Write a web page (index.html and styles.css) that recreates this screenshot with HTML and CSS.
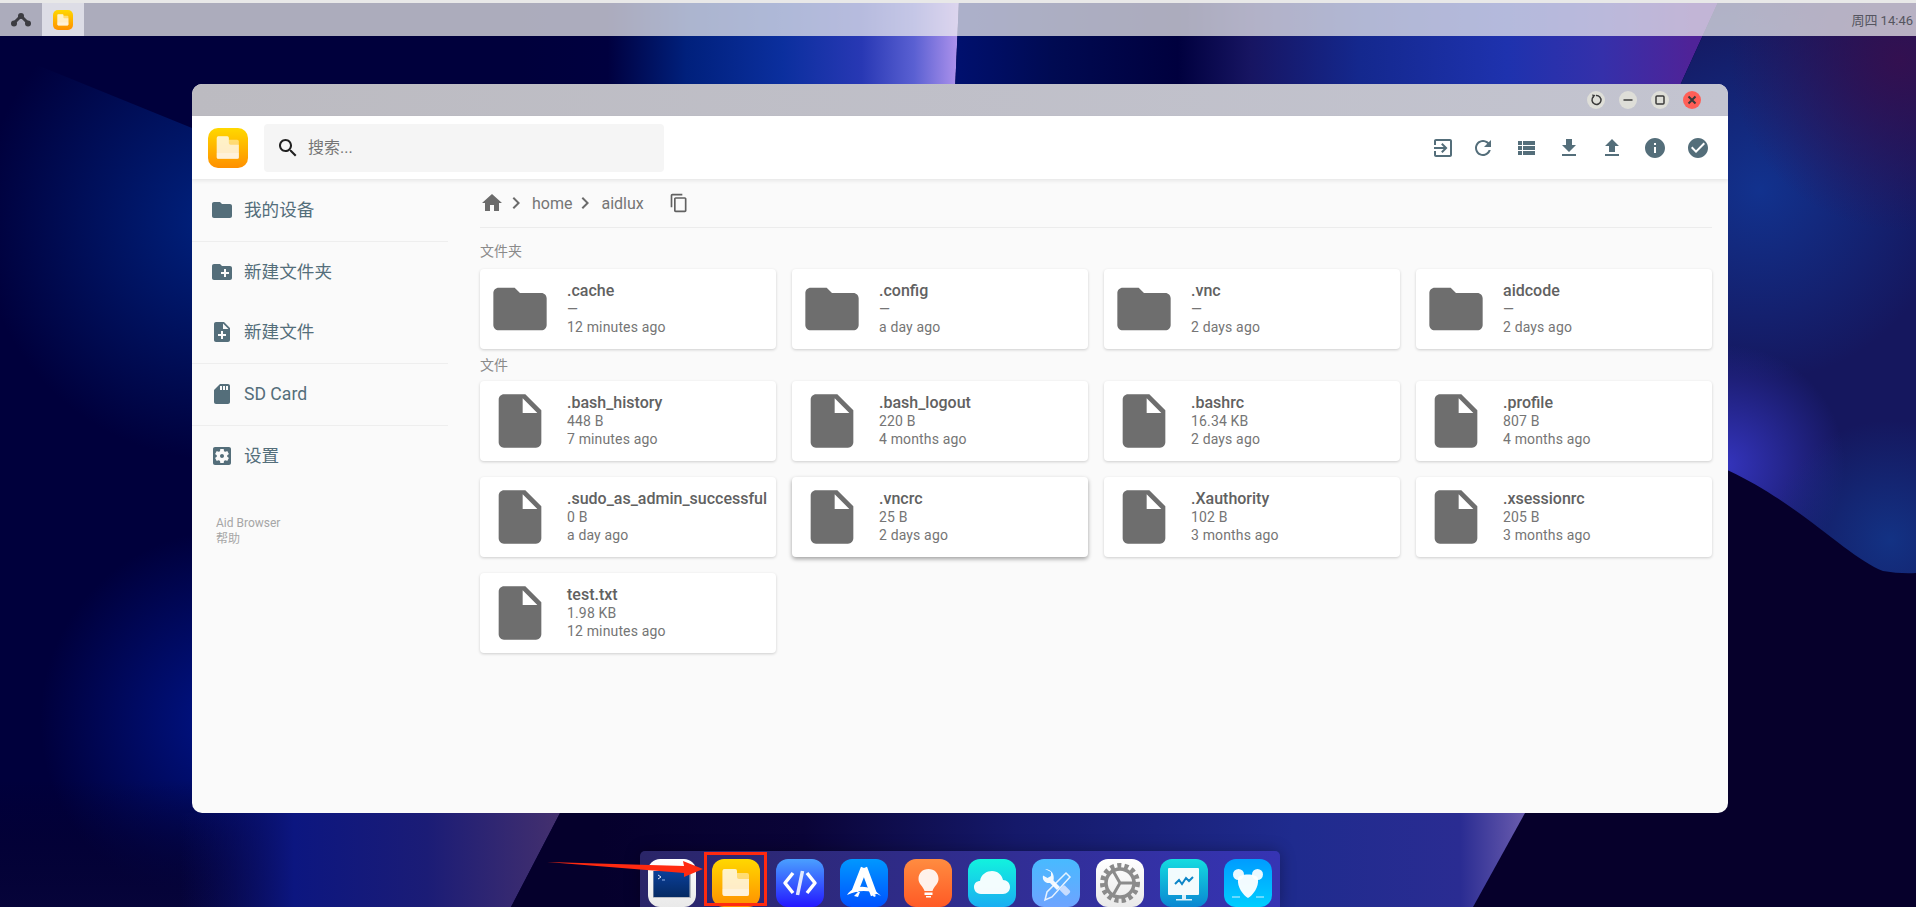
FILE: index.html
```html
<!DOCTYPE html>
<html lang="zh-CN">
<head>
<meta charset="utf-8">
<title>Aid Browser</title>
<link rel="stylesheet" href="styles.css">
</head>
<body>
<svg class="sprite" xmlns="http://www.w3.org/2000/svg">
  <defs>
    <linearGradient id="g-files" x1="0" y1="0" x2="0" y2="1"><stop offset="0" stop-color="#ffd800"/><stop offset="1" stop-color="#ff9000"/></linearGradient>
    <linearGradient id="g-term" x1="0" y1="0" x2="0" y2="1"><stop offset="0" stop-color="#0a3f9a"/><stop offset="1" stop-color="#052a63"/></linearGradient>
    <linearGradient id="g-code" x1="0" y1="0" x2="0" y2="1"><stop offset="0" stop-color="#4aa0ff"/><stop offset="1" stop-color="#2418ff"/></linearGradient>
    <linearGradient id="g-store" x1="0" y1="0" x2="0" y2="1"><stop offset="0" stop-color="#0098ff"/><stop offset="1" stop-color="#0052ff"/></linearGradient>
    <linearGradient id="g-bulb" x1="0" y1="0" x2="0" y2="1"><stop offset="0" stop-color="#ff8c40"/><stop offset="1" stop-color="#ff5a26"/></linearGradient>
    <linearGradient id="g-cloud" x1="0" y1="0" x2="0" y2="1"><stop offset="0" stop-color="#12f2de"/><stop offset="1" stop-color="#1aaef2"/></linearGradient>
    <linearGradient id="g-tools" x1="0" y1="0" x2="0" y2="1"><stop offset="0" stop-color="#48baff"/><stop offset="1" stop-color="#6ea4ff"/></linearGradient>
    <linearGradient id="g-gear" x1="0" y1="0" x2="0" y2="1"><stop offset="0" stop-color="#ffffff"/><stop offset="1" stop-color="#e9e9e9"/></linearGradient>
    <linearGradient id="g-mon" x1="0" y1="0" x2="0" y2="1"><stop offset="0" stop-color="#14dce0"/><stop offset="1" stop-color="#0a86d2"/></linearGradient>
    <linearGradient id="g-mouse" x1="0" y1="0" x2="0" y2="1"><stop offset="0" stop-color="#009cff"/><stop offset="1" stop-color="#00ceff"/></linearGradient>
  </defs>
  <symbol id="i-files" viewBox="0 0 48 48">
    <rect width="48" height="48" rx="12" fill="url(#g-files)"/>
    <path d="M12.500 10H23a2 2 0 0 1 2 2v2h10a2 2 0 0 1 2 2v19a2 2 0 0 1-2 2H12.500a2 2 0 0 1-2-2V12a2 2 0 0 1 2-2z" fill="#fff" fill-opacity=".45"/>
    <path d="M12.500 10H23a2 2 0 0 1 2 2v6a2 2 0 0 0 2 2h10v15a2 2 0 0 1-2 2H12.500a2 2 0 0 1-2-2V12a2 2 0 0 1 2-2z" fill="#fff" fill-opacity=".6"/>
    <path d="M10.500 30H37v5a2 2 0 0 1-2 2H12.500a2 2 0 0 1-2-2z" fill="#fff" fill-opacity=".35"/>
  </symbol>
  <symbol id="i-folder" viewBox="0 0 24 24"><path d="M10 4H4c-1.100 0-1.990.9-1.990 2L2 18c0 1.100.9 2 2 2h16c1.100 0 2-.9 2-2V8c0-1.100-.9-2-2-2h-8l-2-2z"/></symbol>
  <symbol id="i-file" viewBox="0 0 24 24"><path d="M6 2c-1.100 0-1.990.9-1.990 2L4 20c0 1.100.89 2 1.990 2H18c1.100 0 2-.9 2-2V8l-6-6H6zm7 7V3.500L18.500 9H13z"/></symbol>
  <symbol id="i-newfolder" viewBox="0 0 24 24"><path d="M20 6h-8l-2-2H4c-1.110 0-1.990.89-1.990 2L2 18c0 1.110.89 2 2 2h16c1.110 0 2-.89 2-2V8c0-1.110-.89-2-2-2zm-1 8h-3v3h-2v-3h-3v-2h3V9h2v3h3v2z"/></symbol>
  <symbol id="i-newfile" viewBox="0 0 24 24"><path d="M14 2H6c-1.100 0-1.990.9-1.990 2L4 20c0 1.100.89 2 1.990 2H18c1.100 0 2-.9 2-2V8l-6-6zm2 14h-3v3h-2v-3H8v-2h3v-3h2v3h3v2zm-3-7V3.500L18.500 9H13z"/></symbol>
  <symbol id="i-sd" viewBox="0 0 24 24"><path d="M18 2h-8L4.020 8 4 20c0 1.100.9 2 2 2h12c1.100 0 2-.9 2-2V4c0-1.100-.9-2-2-2zm-6 6h-2V4h2v4zm3 0h-2V4h2v4zm3 0h-2V4h2v4z"/></symbol>
  <symbol id="i-settings" viewBox="0 0 24 24"><path d="M12 10c-1.100 0-2 .9-2 2s.9 2 2 2 2-.9 2-2-.9-2-2-2zm7-7H5c-1.110 0-2 .9-2 2v14c0 1.100.89 2 2 2h14c1.100 0 2-.9 2-2V5c0-1.100-.9-2-2-2zm-1.750 9c0 .23-.02.46-.05.68l1.480 1.160c.13.11.17.3.08.45l-1.400 2.420c-.09.15-.27.21-.43.15l-1.740-.7c-.36.28-.76.51-1.180.69l-.26 1.850c-.03.17-.18.3-.35.3h-2.800c-.17 0-.32-.13-.35-.29l-.26-1.850c-.43-.18-.82-.41-1.180-.69l-1.740.7c-.16.06-.34 0-.43-.15l-1.400-2.420c-.09-.15-.05-.34.08-.45l1.480-1.160c-.03-.23-.05-.46-.05-.69 0-.23.02-.46.05-.68l-1.480-1.160c-.13-.11-.17-.3-.08-.45l1.400-2.420c.09-.15.27-.21.43-.15l1.740.7c.36-.28.76-.51 1.180-.69l.26-1.850c.03-.17.18-.3.35-.3h2.800c.17 0 .32.13.35.29l.26 1.850c.43.18.82.41 1.180.69l1.740-.7c.16-.06.34 0 .43.15l1.400 2.420c.09.15.05.34-.08.45l-1.480 1.160c.03.23.05.46.05.69z"/></symbol>
  <symbol id="i-search" viewBox="0 0 24 24"><path d="M15.500 14h-.79l-.28-.27C15.410 12.590 16 11.110 16 9.500 16 5.910 13.090 3 9.500 3S3 5.910 3 9.500 5.910 16 9.500 16c1.610 0 3.090-.59 4.230-1.570l.27.28v.79l5 4.990L20.490 19l-4.990-5zm-6 0C7.010 14 5 11.990 5 9.500S7.010 5 9.500 5 14 7.010 14 9.500 11.990 14 9.500 14z"/></symbol>
  <symbol id="i-exit" viewBox="0 0 24 24"><path d="M10.090 15.590L11.500 17l5-5-5-5-1.410 1.410L12.670 11H3v2h9.670l-2.580 2.590zM19 3H5c-1.110 0-2 .9-2 2v4h2V5h14v14H5v-4H3v4c0 1.100.89 2 2 2h14c1.100 0 2-.9 2-2V5c0-1.100-.9-2-2-2z"/></symbol>
  <symbol id="i-refresh" viewBox="0 0 24 24"><path d="M17.650 6.350C16.200 4.900 14.210 4 12 4c-4.420 0-7.990 3.580-7.990 8s3.570 8 7.990 8c3.730 0 6.840-2.550 7.730-6h-2.080c-.82 2.330-3.040 4-5.650 4-3.310 0-6-2.690-6-6s2.690-6 6-6c1.660 0 3.140.69 4.220 1.780L13 11h7V4l-2.350 2.350z"/></symbol>
  <symbol id="i-list" viewBox="0 0 24 24"><path d="M4 14h4v-4H4v4zm0 5h4v-4H4v4zM4 9h4V5H4v4zm5 5h12v-4H9v4zm0 5h12v-4H9v4zM9 5v4h12V5H9z"/></symbol>
  <symbol id="i-down" viewBox="0 0 24 24"><path d="M19 9h-4V3H9v6H5l7 7 7-7zM5 18v2h14v-2H5z"/></symbol>
  <symbol id="i-up" viewBox="0 0 24 24"><path d="M9 16h6v-6h4l-7-7-7 7h4v6zm-4 2h14v2H5z"/></symbol>
  <symbol id="i-info" viewBox="0 0 24 24"><path d="M12 2C6.480 2 2 6.480 2 12s4.480 10 10 10 10-4.480 10-10S17.520 2 12 2zm1 15h-2v-6h2v6zm0-8h-2V7h2v2z"/></symbol>
  <symbol id="i-check" viewBox="0 0 24 24"><path d="M12 2C6.480 2 2 6.480 2 12s4.480 10 10 10 10-4.480 10-10S17.520 2 12 2zm-2 15l-5-5 1.410-1.410L10 14.170l7.590-7.590L19 8l-9 9z"/></symbol>
  <symbol id="i-home" viewBox="0 0 24 24"><path d="M10 20v-6h4v6h5v-8h3L12 3 2 12h3v8z"/></symbol>
  <symbol id="i-chev" viewBox="0 0 24 24"><path d="M10 6L8.590 7.410 13.170 12l-4.580 4.580L10 18l6-6z"/></symbol>
  <symbol id="i-copy" viewBox="0 0 24 24"><path d="M16 1H4c-1.100 0-2 .9-2 2v14h2V3h12V1zm3 4H8c-1.100 0-2 .9-2 2v14c0 1.100.9 2 2 2h11c1.100 0 2-.9 2-2V7c0-1.100-.9-2-2-2zm0 16H8V7h11v14z"/></symbol>
</svg>

<svg class="wallpaper" viewBox="0 0 1916 907" preserveAspectRatio="none" xmlns="http://www.w3.org/2000/svg">
  <defs>
    <linearGradient id="w-a" gradientUnits="userSpaceOnUse" x1="520" y1="0" x2="958" y2="0">
      <stop offset="0" stop-color="#00003c"/><stop offset=".2" stop-color="#00003f"/><stop offset=".38" stop-color="#00207c"/><stop offset=".6" stop-color="#0b2f9e"/><stop offset=".78" stop-color="#2838b4"/><stop offset=".9" stop-color="#5a60d2"/><stop offset="1" stop-color="#ad92ec"/>
    </linearGradient>
    <linearGradient id="w-b" gradientUnits="userSpaceOnUse" x1="958" y1="0" x2="1690" y2="0">
      <stop offset="0" stop-color="#00106e"/><stop offset=".13" stop-color="#000a52"/><stop offset=".3" stop-color="#00003e"/><stop offset=".4" stop-color="#171562"/><stop offset=".55" stop-color="#14288e"/><stop offset=".75" stop-color="#1e32ae"/><stop offset=".88" stop-color="#3530aa"/><stop offset="1" stop-color="#4f2398"/>
    </linearGradient>
    <linearGradient id="w-c" gradientUnits="userSpaceOnUse" x1="180" y1="0" x2="560" y2="0">
      <stop offset="0" stop-color="#0a0f66" stop-opacity="0"/><stop offset=".3" stop-color="#0c1680"/><stop offset=".65" stop-color="#1b1c76"/><stop offset="1" stop-color="#44306e"/>
    </linearGradient>
    <linearGradient id="w-d" gradientUnits="userSpaceOnUse" x1="600" y1="0" x2="1525" y2="0">
      <stop offset="0" stop-color="#05002c"/><stop offset=".22" stop-color="#0a0438"/><stop offset=".45" stop-color="#15196a"/><stop offset=".75" stop-color="#1f2b8e"/><stop offset=".93" stop-color="#2a2c92"/><stop offset="1" stop-color="#6a5cae"/>
    </linearGradient>
    <radialGradient id="w-e" gradientUnits="userSpaceOnUse" cx="220" cy="220" r="240"><stop offset="0" stop-color="#00227f"/><stop offset="1" stop-color="#00227f" stop-opacity="0"/></radialGradient>
    <radialGradient id="w-f" gradientUnits="userSpaceOnUse" cx="230" cy="720" r="190"><stop offset="0" stop-color="#001488"/><stop offset="1" stop-color="#001488" stop-opacity="0"/></radialGradient>
    <radialGradient id="w-g" gradientUnits="userSpaceOnUse" cx="1760" cy="190" r="190"><stop offset="0" stop-color="#12328e"/><stop offset="1" stop-color="#12328e" stop-opacity="0"/></radialGradient>
    <radialGradient id="w-h" gradientUnits="userSpaceOnUse" cx="1900" cy="60" r="170"><stop offset="0" stop-color="#331050"/><stop offset="1" stop-color="#331050" stop-opacity="0"/></radialGradient>
    <radialGradient id="w-i" gradientUnits="userSpaceOnUse" cx="1725" cy="465" r="120"><stop offset="0" stop-color="#3434bc"/><stop offset="1" stop-color="#3434bc" stop-opacity="0"/></radialGradient>
    <radialGradient id="w-j" gradientUnits="userSpaceOnUse" cx="1890" cy="540" r="120"><stop offset="0" stop-color="#133284"/><stop offset="1" stop-color="#133284" stop-opacity="0"/></radialGradient>
    <linearGradient id="w-k" gradientUnits="userSpaceOnUse" x1="0" y1="780" x2="0" y2="907"><stop offset="0" stop-color="#05002a" stop-opacity="0"/><stop offset="1" stop-color="#06043a"/></linearGradient>
  </defs>
  <rect class="wp-dark" width="1916" height="907"/>
  <path d="M0 50L192 128L600 300V907H0Z" fill="url(#w-e)"/>
  <path d="M0 500H520V907H0Z" fill="url(#w-f)"/>
  <path d="M0 780H400V907H0Z" fill="url(#w-k)"/>
  <path d="M180 907V813H560L511 907Z" fill="url(#w-c)"/>
  <path d="M500 0H959L955 90H500Z" fill="url(#w-a)"/>
  <path d="M959 0H1719L1678 90H955Z" fill="url(#w-b)"/>
  <path class="wp-night" d="M1719 0L1678 90V600H1916V0Z"/>
  <path d="M1719 0L1678 90V600H1916V0Z" fill="url(#w-g)"/>
  <path d="M1719 0L1678 90V300H1916V0Z" fill="url(#w-h)"/>
  <rect x="1678" y="340" width="238" height="240" fill="url(#w-i)"/>
  <rect x="1770" y="420" width="146" height="160" fill="url(#w-j)"/>
  <path class="wp-abyss" d="M1670 452C1770 470 1840 555 1883 571Q1900 574 1916 573V907H1473L1525 813H1670Z"/>
  <path d="M560 813H1525L1473 907H511Z" fill="url(#w-d)"/>
</svg>

<header class="topbar">
  <div class="top-btn">
    <svg class="mark" viewBox="0 0 20 14"><path class="mark-line" d="M2.500 10.500L10 3L17.500 10.500"/><circle class="mark-dot" cx="10" cy="3" r="3"/><circle class="mark-dot" cx="3" cy="10.500" r="3"/><circle class="mark-dot" cx="17" cy="10.500" r="3"/></svg>
  </div>
  <div class="top-btn top-btn-active"><svg class="top-app"><use href="#i-files"/></svg></div>
  <div class="clock">周四 14:46</div>
</header>

<main class="window">
  <div class="titlebar">
    <span class="win-btn"><svg viewBox="0 0 18 18"><path class="win-stroke" d="M6.300 5.800A4.500 4.500 0 1 0 9 4.500"/><path class="win-fill" d="M5 3.500l3.500.4-2.200 3z"/></svg></span>
    <span class="win-btn"><svg viewBox="0 0 18 18"><path class="win-stroke" d="M4.500 9h9"/></svg></span>
    <span class="win-btn"><svg viewBox="0 0 18 18"><rect class="win-stroke" x="5" y="5" width="8" height="8" rx="1"/></svg></span>
    <span class="win-btn win-close"><svg viewBox="0 0 18 18"><path class="win-stroke win-bold" d="M5.500 5.500l7 7M12.500 5.500l-7 7"/></svg></span>
  </div>

  <div class="toolbar">
    <svg class="logo"><use href="#i-files"/></svg>
    <div class="search">
      <svg class="ic ic-black"><use href="#i-search"/></svg>
      <span class="placeholder">搜索...</span>
    </div>
    <div class="tools">
      <svg class="ic tool-first"><use href="#i-exit"/></svg>
      <svg class="ic"><use href="#i-refresh"/></svg>
      <svg class="ic"><use href="#i-list"/></svg>
      <svg class="ic"><use href="#i-down"/></svg>
      <svg class="ic"><use href="#i-up"/></svg>
      <svg class="ic"><use href="#i-info"/></svg>
      <svg class="ic"><use href="#i-check"/></svg>
    </div>
  </div>

  <div class="content">
    <nav class="sidebar">
      <a class="nav-item"><svg class="ic"><use href="#i-folder"/></svg><span class="nav-cjk">我的设备</span></a>
      <hr class="nav-rule">
      <a class="nav-item"><svg class="ic"><use href="#i-newfolder"/></svg><span class="nav-cjk">新建文件夹</span></a>
      <a class="nav-item"><svg class="ic"><use href="#i-newfile"/></svg><span class="nav-cjk">新建文件</span></a>
      <hr class="nav-rule">
      <a class="nav-item"><svg class="ic"><use href="#i-sd"/></svg><span>SD Card</span></a>
      <hr class="nav-rule">
      <a class="nav-item"><svg class="ic"><use href="#i-settings"/></svg><span class="nav-cjk">设置</span></a>
      <div class="side-foot"><div>Aid Browser</div><div>帮助</div></div>
    </nav>

    <section class="files">
      <div class="crumbs">
        <svg class="ic ic-gray"><use href="#i-home"/></svg>
        <svg class="ic ic-gray"><use href="#i-chev"/></svg>
        <span class="crumb">home</span>
        <svg class="ic ic-gray"><use href="#i-chev"/></svg>
        <span class="crumb">aidlux</span>
        <svg class="ic-copy"><use href="#i-copy"/></svg>
      </div>

      <h2 class="group group-first">文件夹</h2>
      <div class="grid">
        <article class="card"><svg class="card-ic"><use href="#i-folder"/></svg><div class="meta"><div class="name">.cache</div><div>—</div><div>12 minutes ago</div></div></article>
        <article class="card"><svg class="card-ic"><use href="#i-folder"/></svg><div class="meta"><div class="name">.config</div><div>—</div><div>a day ago</div></div></article>
        <article class="card"><svg class="card-ic"><use href="#i-folder"/></svg><div class="meta"><div class="name">.vnc</div><div>—</div><div>2 days ago</div></div></article>
        <article class="card"><svg class="card-ic"><use href="#i-folder"/></svg><div class="meta"><div class="name">aidcode</div><div>—</div><div>2 days ago</div></div></article>
      </div>

      <h2 class="group">文件</h2>
      <div class="grid">
        <article class="card"><svg class="card-ic"><use href="#i-file"/></svg><div class="meta"><div class="name">.bash_history</div><div>448 B</div><div>7 minutes ago</div></div></article>
        <article class="card"><svg class="card-ic"><use href="#i-file"/></svg><div class="meta"><div class="name">.bash_logout</div><div>220 B</div><div>4 months ago</div></div></article>
        <article class="card"><svg class="card-ic"><use href="#i-file"/></svg><div class="meta"><div class="name">.bashrc</div><div>16.34 KB</div><div>2 days ago</div></div></article>
        <article class="card"><svg class="card-ic"><use href="#i-file"/></svg><div class="meta"><div class="name">.profile</div><div>807 B</div><div>4 months ago</div></div></article>
        <article class="card"><svg class="card-ic"><use href="#i-file"/></svg><div class="meta"><div class="name">.sudo_as_admin_successful</div><div>0 B</div><div>a day ago</div></div></article>
        <article class="card card-hover"><svg class="card-ic"><use href="#i-file"/></svg><div class="meta"><div class="name">.vncrc</div><div>25 B</div><div>2 days ago</div></div></article>
        <article class="card"><svg class="card-ic"><use href="#i-file"/></svg><div class="meta"><div class="name">.Xauthority</div><div>102 B</div><div>3 months ago</div></div></article>
        <article class="card"><svg class="card-ic"><use href="#i-file"/></svg><div class="meta"><div class="name">.xsessionrc</div><div>205 B</div><div>3 months ago</div></div></article>
        <article class="card"><svg class="card-ic"><use href="#i-file"/></svg><div class="meta"><div class="name">test.txt</div><div>1.98 KB</div><div>12 minutes ago</div></div></article>
      </div>
    </section>
  </div>
</main>

<footer class="dock">
  <svg class="dock-ic" viewBox="0 0 48 48">
    <rect width="48" height="48" rx="12" fill="url(#g-gear)"/>
    <rect x="5" y="12" width="38" height="27" fill="#b9bcc4"/>
    <rect x="5.500" y="12" width="36" height="26" fill="url(#g-term)"/>
    <path d="M10 16l3 2-3 2" fill="none" stroke="#dfe9ff" stroke-width="1"/>
    <path d="M14 21h3" stroke="#8fb0e8" stroke-width="1"/>
  </svg>
  <svg class="dock-ic"><use href="#i-files"/></svg>
  <svg class="dock-ic" viewBox="0 0 48 48">
    <rect width="48" height="48" rx="12" fill="url(#g-code)"/>
    <path d="M17 14L9 24l8 10M31 14l8 10-8 10" fill="none" stroke="#fff" stroke-width="3.500" stroke-linejoin="round"/>
    <path d="M26.500 12L21.500 36" stroke="#fff" stroke-opacity=".85" stroke-width="3.500"/>
  </svg>
  <svg class="dock-ic" viewBox="0 0 48 48">
    <rect width="48" height="48" rx="12" fill="url(#g-store)"/>
    <path d="M24 9L15 32M24 9L34 36" fill="none" stroke="#fff" stroke-width="6.500"/>
    <path d="M7 36C14 26 28 24 41 37C31 31 20 30 7 36Z" fill="#fff"/>
    <path d="M14 37L18 33H20L18 38ZM34 38L30 33H32L36 37Z" fill="#fff"/>
  </svg>
  <svg class="dock-ic" viewBox="0 0 48 48">
    <rect width="48" height="48" rx="12" fill="url(#g-bulb)"/>
    <path d="M24.500 10C18.500 10 14.500 14 14.500 20C14.500 25 19 27 20.500 32H28.500C30 27 34.500 25 34.500 20C34.500 14 30.500 10 24.500 10Z" fill="#fff" fill-opacity=".9"/>
    <path d="M20.500 33.500h8v2.500h-8zM22 37h5v1.500h-5z" fill="#fff"/>
  </svg>
  <svg class="dock-ic" viewBox="0 0 48 48">
    <rect width="48" height="48" rx="12" fill="url(#g-cloud)"/>
    <path d="M13 35C8 35 6 31 6 28C6 24 9 22 12 22C13 15 19 12 24 12C30 12 34 16 35 21C39 21 42 24 42 28C42 32 39 35 35 35Z" fill="#fff" fill-opacity=".95"/>
  </svg>
  <svg class="dock-ic" viewBox="0 0 48 48">
    <rect width="48" height="48" rx="12" fill="url(#g-tools)"/>
    <path d="M34 14L38 18L20 38L13 41L15 33Z" fill="none" stroke="#fff" stroke-opacity=".85" stroke-width="1.500"/>
    <path d="M13 10L19 13V17L15.500 19L11 16.500C10 21 13 24.500 18 24L25 31L28 28L21.500 21.500C23 15 19 10 13 10Z" fill="#fff" fill-opacity=".92"/>
    <rect x="28" y="28" width="10" height="7" rx="2" transform="rotate(45 33 31.500)" fill="#c7ddff"/>
  </svg>
  <svg class="dock-ic" viewBox="0 0 48 48">
    <rect width="48" height="48" rx="12" fill="url(#g-gear)"/>
    <circle cx="24" cy="24" r="17.500" fill="none" stroke="#8b8b8b" stroke-width="5" stroke-dasharray="4.100 3.100"/>
    <circle cx="24" cy="24" r="14" fill="none" stroke="#8b8b8b" stroke-width="3.500"/>
    <path d="M24 24L40 24M24 24L16 10M24 24L16 38" stroke="#8b8b8b" stroke-width="3"/>
  </svg>
  <svg class="dock-ic" viewBox="0 0 48 48">
    <rect width="48" height="48" rx="12" fill="url(#g-mon)"/>
    <rect x="8" y="9" width="31" height="27" rx="1" fill="#fff" fill-opacity=".95"/>
    <path d="M15 25L19 21L22 25L26 19L29 22L33 18" fill="none" stroke="#0c86c8" stroke-width="2"/>
    <path d="M22 36h4v4h-4zM16 40h16v1.500H16z" fill="#fff" fill-opacity=".85"/>
  </svg>
  <svg class="dock-ic" viewBox="0 0 48 48">
    <rect width="48" height="48" rx="12" fill="url(#g-mouse)"/>
    <circle cx="14.500" cy="15.500" r="5.500" fill="#fff" fill-opacity=".92"/>
    <circle cx="33.500" cy="15.500" r="5.500" fill="#fff" fill-opacity=".92"/>
    <path d="M14 20C14 14 34 14 34 20C35 28 29 36 24 39C19 36 13 28 14 20Z" fill="#fff" fill-opacity=".95"/>
    <path d="M8 38h8M32 38h8" stroke="#cfefff" stroke-width="1"/>
  </svg>
</footer>

<div class="annot-box"></div>
<svg class="annot-arrow" viewBox="0 0 160 18" xmlns="http://www.w3.org/2000/svg"><path class="annot-fill" d="M2 1L139 5L138 0L158 8L139 16L139 12Z"/></svg>
</body>
</html>
```

FILE: styles.css
```css
* { box-sizing: border-box; }

html, body {
  margin: 0;
  height: 907px;
  overflow: hidden;
}

body {
  position: relative;
  background: #00003c;
  font-family: Roboto, "Noto Sans CJK SC", sans-serif;
  color: #757575;
}

.sprite {
  position: absolute;
  width: 0;
  height: 0;
}

.wallpaper {
  position: absolute;
  inset: 0;
  width: 1916px;
  height: 907px;
}

.wp-dark { fill: #00003c; }
.wp-night { fill: #15175e; }
.wp-abyss { fill: #06002b; }

/* top bar */
.topbar {
  position: relative;
  height: 36px;
  display: flex;
  border-top: 3px solid #e8e8e8;
  background: rgba(239, 239, 239, 0.72);
}

.top-btn {
  width: 42px;
  display: flex;
  align-items: center;
  justify-content: center;
}

.top-btn-active { background: #dddde6; }

.mark { width: 20px; height: 14px; }
.mark-line { fill: none; stroke: #3c3c42; stroke-width: 3; }
.mark-dot { fill: #3c3c42; }

.top-app { width: 20px; height: 20px; }

.clock {
  margin-left: auto;
  padding-right: 3px;
  align-self: center;
  font-size: 13px;
  color: #555560;
}

/* window */
.window {
  position: absolute;
  left: 192px;
  top: 84px;
  width: 1536px;
  height: 729px;
  display: flex;
  flex-direction: column;
  border-radius: 10px;
  overflow: hidden;
  background: #fafafa;
}

.titlebar {
  height: 32px;
  flex: none;
  display: flex;
  align-items: center;
  justify-content: flex-end;
  gap: 14px;
  padding-right: 27px;
  background: linear-gradient(90deg, #bcbbc1, #c3c4d0);
}

.win-btn {
  width: 18px;
  height: 18px;
  border-radius: 50%;
  background: #deded8;
}

.win-btn svg { display: block; width: 18px; height: 18px; }
.win-close { background: #ff5f57; }
.win-stroke { fill: none; stroke: #3a3a3a; stroke-width: 1.500; }
.win-bold { stroke-width: 2; }
.win-fill { fill: #3a3a3a; }

.toolbar {
  position: relative;
  z-index: 1;
  height: 63px;
  flex: none;
  display: flex;
  align-items: center;
  padding: 0 18px 0 16px;
  background: #fff;
  box-shadow: 0 2px 4px rgba(0, 0, 0, 0.08);
}

.logo { width: 40px; height: 40px; flex: none; }

.search {
  width: 400px;
  height: 48px;
  margin-left: 16px;
  padding-left: 12px;
  display: flex;
  align-items: center;
  gap: 8px;
  border-radius: 4px;
  background: #f5f5f5;
}

.placeholder {
  margin-bottom: 4px;
  font-size: 16px;
  color: #757575;
}

.ic {
  width: 24px;
  height: 24px;
  flex: none;
  fill: #546e7a;
}

.ic-black { fill: #212121; }
.ic-gray { fill: #6b6b6b; }

.tools {
  margin-left: auto;
  display: flex;
  gap: 19px;
}

.tool-first { margin-right: -3px; }

/* body of the window */
.content {
  flex: 1;
  display: flex;
  min-height: 0;
}

.sidebar {
  width: 256px;
  flex: none;
  padding-top: 1px;
}

.nav-item {
  height: 60px;
  display: flex;
  align-items: center;
  padding-left: 18px;
  gap: 10px;
  font-size: 17.600px;
  color: #546e7a;
}

.nav-cjk { margin-bottom: 3px; }

.nav-rule {
  height: 1px;
  margin: 1px 0 0;
  border: 0;
  background: #eeeeee;
}

.side-foot {
  margin: 29px 0 0 24px;
  font-size: 12px;
  line-height: 16px;
  color: #a6a6a6;
}

.files {
  flex: 1;
  padding: 0 16px 0 32px;
}

.crumbs {
  height: 49px;
  display: flex;
  align-items: center;
  border-bottom: 1px solid #ececec;
}

.crumb {
  padding: 0 1px 0 4px;
  font-size: 16px;
  color: #757575;
}

.ic-copy {
  width: 20px;
  height: 20px;
  margin-left: 24px;
  fill: #616161;
}

.group {
  margin: 0;
  height: 32px;
  line-height: 32px;
  font-size: 14px;
  font-weight: 400;
  color: #8a8a8a;
}

.group-first {
  height: 41px;
  line-height: 46px;
}

.grid {
  display: grid;
  grid-template-columns: repeat(4, 296px);
  gap: 16px;
}

.card {
  height: 80px;
  display: flex;
  align-items: center;
  padding-left: 8px;
  border-radius: 4px;
  background: #fff;
  box-shadow: 0 1px 3px rgba(0, 0, 0, 0.18);
}

.card-hover { box-shadow: 0 2px 4px rgba(0, 0, 0, 0.36); }

.card-ic {
  width: 64px;
  height: 64px;
  flex: none;
  fill: #6e6e6e;
}

.meta {
  margin-left: 15px;
  font-size: 14px;
  line-height: 18px;
  letter-spacing: 0.15px;
  color: #757575;
  white-space: nowrap;
}

.name {
  font-size: 16px;
  font-weight: 500;
  letter-spacing: 0;
  color: #616161;
}

/* dock */
.dock {
  position: absolute;
  left: 640px;
  bottom: 0;
  width: 640px;
  height: 56px;
  display: flex;
  gap: 16px;
  padding: 8px 8px 0;
  border-radius: 5px 5px 0 0;
  background: linear-gradient(90deg, #2a2568, #3634b4);
  box-shadow: 0 0 16px rgba(0, 0, 0, 0.3);
}

.dock-ic {
  width: 48px;
  height: 48px;
  flex: none;
}

/* screenshot annotation */
.annot-box {
  position: absolute;
  left: 704px;
  top: 852px;
  width: 63px;
  height: 54px;
  border: 3px solid #ff2a10;
}

.annot-arrow {
  position: absolute;
  left: 545px;
  top: 861px;
  width: 160px;
  height: 18px;
}

.annot-fill { fill: #ff2a10; }
```
